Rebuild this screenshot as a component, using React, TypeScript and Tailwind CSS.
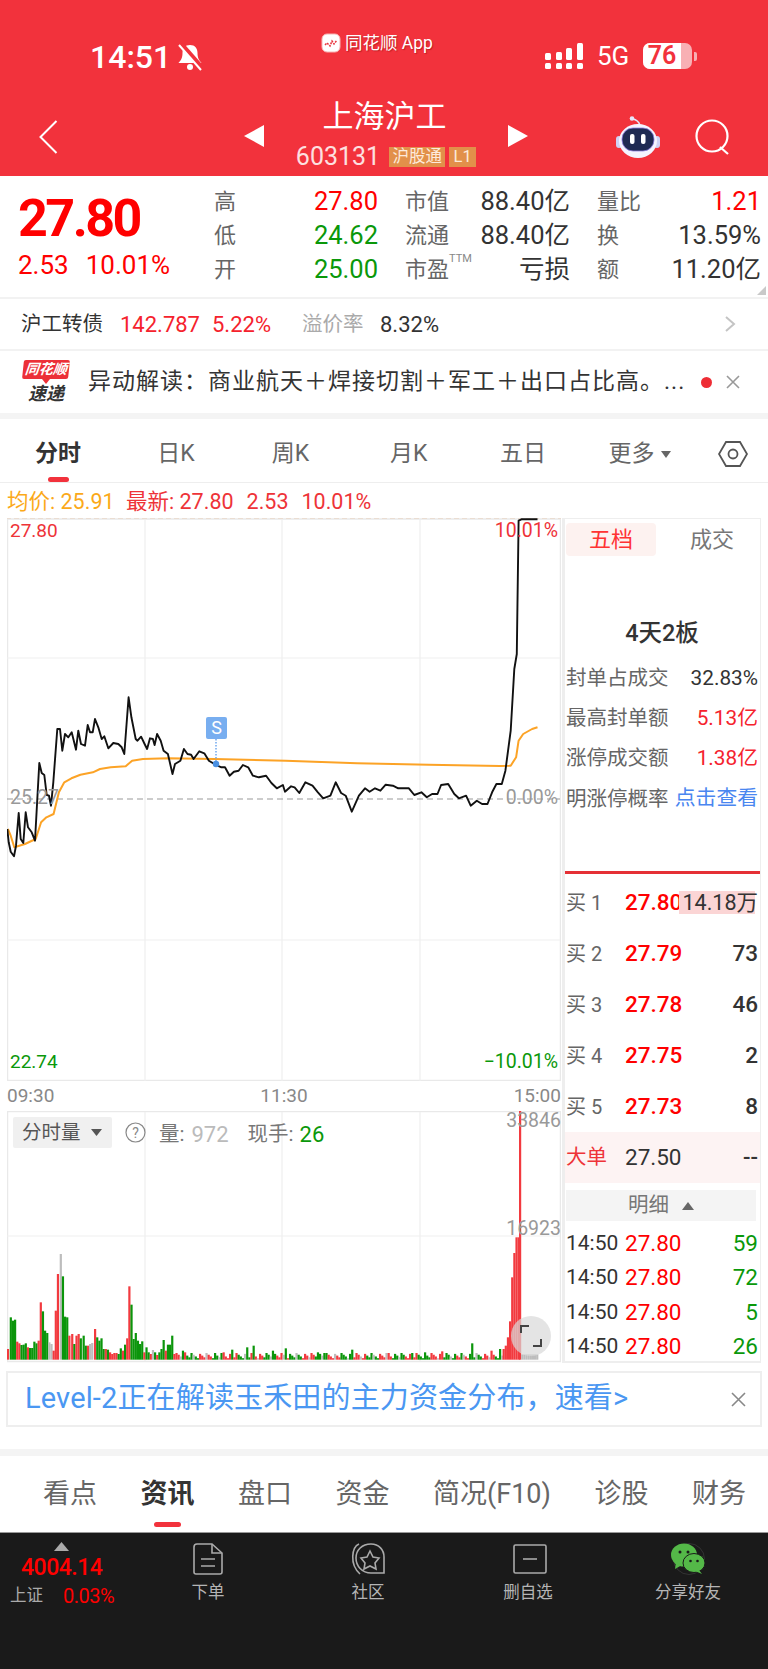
import React from "react";

const Z3 = (p: number[][]) => p.map(([x, y]) => `${(x / 2.8).toFixed(1)},${(y / 3 + 510).toFixed(1)}`).join(" ");
const Z8 = (p: number[][]) => p.map(([x, y]) => `${(x / 3).toFixed(1)},${(y / 3 + 700).toFixed(1)}`).join(" ");

const priceA = [[22,390],[26,430],[32,458],[42,472],[48,440],[56,342],[62,420],[70,432],[77,340],[84,385],[95,400],[105,425],[112,300],[118,192],[125,222],[133,228],[140,288],[147,290],[153,320],[160,250],[172,90],[180,90],[187,155],[195,105],[205,115],[215,100],[228,152],[235,95],[243,135],[255,140],[263,78],[270,100],[278,100],[285,60],[295,85],[305,120],[313,112],[325,148],[340,132],[355,135],[365,145],[373,165]];
const priceB = [[360,565],[368,625],[380,690],[385,695],[395,683],[405,705],[412,720],[420,688],[428,690],[433,708],[440,675],[450,695],[458,725],[470,735],[483,795],[490,765],[505,755],[515,720],[525,735],[535,737],[542,750],[558,727],[572,733],[585,755],[605,768],[620,775],[630,775],[643,800],[655,788],[668,785],[680,768],[695,775],[708,800],[725,805],[745,800],[760,822],[775,838],[792,828],[798,848],[815,832],[825,835],[838,852],[855,820],[875,830],[890,850],[905,868],[925,860],[940,820],[955,852],[968,860],[985,908],[1005,860],[1022,838],[1035,848],[1050,838],[1065,845],[1080,827],[1100,830],[1115,838],[1145,838],[1160,858],[1180,850],[1195,865],[1210,855],[1225,855],[1235,828],[1255,825],[1272,855],[1285,868],[1305,860],[1318,890],[1335,875],[1350,885],[1365,885],[1378,850],[1390,825],[1405,825],[1415,785],[1430,665],[1440,480],[1447,435],[1452,35],[1460,31],[1505,31]];
const avg = [[22,960],[30,980],[40,1015],[70,1005],[100,990],[115,940],[130,925],[150,915],[165,850],[180,820],[200,808],[225,797],[260,790],[280,780],[310,775],[352,772],[370,755],[400,750],[470,748],[600,750],[800,755],[1000,763],[1200,767],[1400,771],[1430,770],[1445,745],[1452,695],[1465,675],[1490,660],[1505,655]];

type Bar = [number, number, string];
const first: Bar[] = [[22,810,"r"],[30,715,"g"],[36,725,"g"],[42,722,"g"],[48,788,"r"],[54,793,"r"],[60,798,"g"],[66,797,"g"],[72,793,"g"],[78,805,"r"],[84,807,"g"],[90,807,"g"],[96,788,"g"],[102,793,"g"],[108,785,"r"],[114,670,"r"],[120,697,"g"],[126,755,"g"],[132,762,"g"],[138,790,"x"],[144,795,"x"],[150,815,"r"],[156,695,"r"],[162,585,"r"],[170,525,"x"],[176,592,"g"],[182,713,"g"],[188,715,"g"],[194,770,"r"],[202,765,"r"],[208,795,"g"],[214,770,"r"],[220,765,"r"],[226,778,"g"],[234,770,"g"],[240,800,"g"],[246,800,"r"],[252,795,"x"],[258,792,"x"],[266,750,"r"],[272,775,"g"],[278,785,"g"],[284,778,"g"],[290,810,"g"],[296,810,"r"],[302,812,"g"],[308,820,"r"],[314,825,"r"],[320,822,"r"],[326,822,"r"],[332,825,"g"],[338,808,"g"],[344,815,"r"],[350,797,"g"],[356,778,"r"],[362,622,"r"],[368,677,"g"],[374,780,"g"],[380,762,"g"],[386,785,"g"],[392,795,"g"],[398,787,"g"],[404,820,"r"],[410,805,"g"],[416,820,"g"],[422,825,"r"],[428,813,"x"],[434,820,"g"],[440,828,"r"],[446,820,"g"],[452,810,"g"],[458,783,"g"],[464,815,"r"],[470,797,"g"],[476,797,"g"],[482,770,"g"],[488,825,"r"]];
const spikes: Record<number, Bar> = {};
[[512,815,"g"],[518,820,"r"],[602,822,"g"],[626,820,"r"],[650,812,"g"],[692,805,"g"],[710,800,"g"],[764,815,"g"],[800,808,"g"],[890,820,"g"],[908,822,"g"],[986,812,"g"],[1088,822,"r"],[1154,822,"g"],[1190,820,"g"],[1238,817,"r"],[1292,822,"g"],[1322,793,"g"],[1376,815,"r"],[1400,810,"g"]].forEach((b) => { spikes[b[0] as number] = b as Bar; });
const low: Bar[] = [];
for (let i = 0, x = 494; x < 1410; i++, x += 6) {
  const c = ["r","g","g","r","x","r","g","r","r","g","x","g"][(i * 5) % 12];
  low.push(spikes[x] || [x, 822 + ((i * 37) % 7) * 2.6, c]);
}
const last: Bar[] = [[1410,810,"r"],[1416,800,"r"],[1422,775,"r"],[1428,727,"r"],[1434,595,"r"],[1440,522,"r"],[1446,475,"r"],[1452,475,"r"],[1456,95,"r"]];
const bars = [...first, ...low, ...last];
for (let x = 1462; x < 1510; x += 6) bars.push([x, 826, "x"]);
const fillOf: Record<string, string> = { r: "#f23a3f", g: "#0b950b", x: "#bdbdbd" };

function Stat({ label, value, color }: { label: React.ReactNode; value: string; color: string }) {
  return (
    <div className="flex items-center justify-between h-[34px]">
      <span className="text-[22px] leading-[34px] text-[#666]">{label}</span>
      <span className={`text-[25.5px] leading-none ${color}`}>{value}</span>
    </div>
  );
}

function Rank({ n, p, v, hi }: { n: string; p: string; v: string; hi?: boolean }) {
  return (
    <div className="flex items-center h-[51px]">
      <span className="w-[59px] text-[20px] text-[#666]">买 {n}</span>
      <span className="w-[53px] text-[22.500px] text-[#f00] font-medium">{p}</span>
      {hi ? (
        <span className="ml-auto mr-[3px] w-[76px] h-[23px] bg-[#fbd5d5] flex items-center justify-end text-[21.500px] text-[#333] leading-none whitespace-nowrap">
          <span className="-mr-[3px]">{v}</span>
        </span>
      ) : (
        <span className="ml-auto text-[22.500px] text-[#333] font-medium">{v}</span>
      )}
    </div>
  );
}

function Seal({ label, value, color }: { label: string; value: string; color: string }) {
  return (
    <div className="flex items-center justify-between h-[40.3px]">
      <span className="text-[20.500px] text-[#666] whitespace-nowrap">{label}</span>
      <span className={`text-[20.800px] whitespace-nowrap ${color}`}>{value}</span>
    </div>
  );
}

function Tick({ v }: { v: string }) {
  return (
    <div className="flex items-center h-[34.5px] text-[22.500px]">
      <span className="w-[59px] text-[21px] text-[#333]">14:50</span>
      <span className="text-[#f00]">27.80</span>
      <span className="ml-auto text-[#0a980a]">{v}</span>
    </div>
  );
}

function Foot({ label, children }: { label: string; children: React.ReactNode }) {
  return (
    <div className="w-[160px] flex flex-col items-center pt-[10px]">
      <div className="h-[32px] flex items-center justify-center">{children}</div>
      <div className="mt-[8px] h-[20px] leading-[20px] text-[16.500px] text-[#b5b5b5]">{label}</div>
    </div>
  );
}

export default function App() {
  return (
    <div className="relative w-[768px] h-[1669px] overflow-hidden bg-white [font-family:Roboto,'Noto_Sans_CJK_SC',sans-serif]">
      {/* header */}
      <div className="h-[176px] bg-[#f2323c] text-white">
        <div className="h-[96px] flex items-start pt-[33px]">
          <div className="w-[321px] pl-[90px] pt-[10px] flex items-center">
            <span className="text-[32px] leading-[26px] font-medium">14:51</span>
            <svg className="ml-[6px]" width="26" height="28" viewBox="0 0 26 28" fill="none">
              <path d="M13 2c-5 0-7.500 3.500-7.500 8 0 5.500-2 7.500-4 10h23c-2-2.500-4-4.500-4-10 0-4.500-2.500-8-7.500-8z" fill="#fff" />
              <circle cx="13" cy="24" r="3" fill="#fff" />
              <path d="M4 1l21 24" stroke="#f2323c" strokeWidth="5" />
              <path d="M2 2l22 25" stroke="#fff" strokeWidth="2" />
            </svg>
          </div>
          <div className="w-[224px] flex items-center">
            <svg width="20" height="20" viewBox="0 0 20 20">
              <rect x="1" y="1" width="18" height="18" rx="5" fill="#fff" stroke="#f7b5b5" strokeWidth="1" />
              <path d="M4 12l2-2 3 3 2-5 2 3 3-4" fill="none" stroke="#e8323c" strokeWidth="1.500" strokeDasharray="2 1" />
            </svg>
            <span className="ml-[4px] text-[17.500px] leading-[20px] whitespace-nowrap [text-shadow:1px_1px_1px_rgba(120,0,0,0.4)]">同花顺 App</span>
          </div>
          <div className="pt-[10px] flex items-center">
            <svg width="38" height="26" viewBox="0 0 38 26" fill="#fff">
              <rect x="0" y="20" width="6" height="6" rx="1.500" /><rect x="0" y="10" width="6" height="7" rx="1.500" />
              <rect x="11" y="20" width="6" height="6" rx="1.500" /><rect x="11" y="9" width="6" height="8" rx="1.500" />
              <rect x="21" y="20" width="6" height="6" rx="1.500" /><rect x="21" y="5" width="6" height="12" rx="1.500" />
              <rect x="32" y="20" width="6" height="6" rx="1.500" /><rect x="32" y="0" width="6" height="17" rx="1.500" />
            </svg>
            <span className="ml-[14px] w-[46px] text-[26px] leading-[26px]">5G</span>
            <div className="w-[49px] h-[26px] rounded-[7px] bg-[#f8b0b4]">
              <div className="w-[38px] h-[26px] bg-white text-[#f2323c] text-[25px] leading-[26px] font-semibold text-center rounded-l-[7px]">76</div>
            </div>
            <div className="ml-[2px] w-[3px] h-[9px] rounded-r-[2px] bg-[#f8b0b4]" />
          </div>
        </div>
        <div className="h-[80px] flex">
          <div className="w-[244px] pl-[39px] pt-[24px]">
            <svg width="19" height="34" viewBox="0 0 19 34" fill="none"><path d="M17.500 1L1.500 17l16 16" stroke="#fff" strokeWidth="2" /></svg>
          </div>
          <div className="w-[20px] pt-[29px]">
            <svg width="20" height="22" viewBox="0 0 20 22"><path d="M20 0v22L0 11z" fill="#fff" /></svg>
          </div>
          <div className="w-[244px] flex flex-col items-center pt-[3px]">
            <div className="text-[31px] leading-[36px] whitespace-nowrap -ml-[3px]">上海沪工</div>
            <div className="mt-[12px] h-[20px] flex items-center">
              <span className="text-[25px] leading-[20px] text-[#fde0e0]">603131</span>
              <span className="ml-[9px] w-[56px] h-[20px] bg-[#e2904a] text-[#fdeadb] text-[16.500px] leading-[20px] text-center whitespace-nowrap">沪股通</span>
              <span className="ml-[4px] w-[27px] h-[20px] bg-[#e2904a] text-[#fdeadb] text-[16.500px] leading-[20px] text-center">L1</span>
            </div>
          </div>
          <div className="w-[20px] pt-[29px]">
            <svg width="20" height="22" viewBox="0 0 20 22"><path d="M0 0v22l20-11z" fill="#fff" /></svg>
          </div>
          <div className="ml-[88px] pt-[20px] w-[44px]">
            <svg width="44" height="42" viewBox="0 0 44 42" fill="none">
              <circle cx="16" cy="2.500" r="2.300" fill="#e6e7fb" />
              <path d="M17 3q5 1 7 6" stroke="#e6e7fb" strokeWidth="1.500" />
              <rect x="0" y="20" width="6" height="12" rx="3" fill="#cfd2f5" />
              <rect x="38" y="20" width="6" height="12" rx="3" fill="#cfd2f5" />
              <ellipse cx="22" cy="25" rx="19" ry="17" fill="#f4f4ff" />
              <rect x="6" y="12" width="32" height="23" rx="11" fill="#1f2a52" stroke="#8f7fe0" strokeWidth="0.800" />
              <rect x="14" y="18" width="4.500" height="10" rx="2" fill="#fff" />
              <rect x="25" y="18" width="4.500" height="10" rx="2" fill="#fff" />
            </svg>
          </div>
          <div className="ml-[35px] pt-[23px]">
            <svg width="36" height="36" viewBox="0 0 36 36" fill="none">
              <circle cx="17" cy="17" r="15.500" stroke="#fff" strokeWidth="2.200" />
              <path d="M25 28l8 7" stroke="#fff" strokeWidth="2.200" />
            </svg>
          </div>
        </div>
      </div>

      {/* quote */}
      <div className="relative h-[121px] flex">
        <div className="w-[214px] pl-[18px]">
          <div className="mt-[18px] text-[52px] leading-[50px] font-bold text-[#f00] tracking-[-2.500px]">27.80</div>
          <div className="mt-[8px] flex text-[26px] leading-[26px] text-[#f00]">
            <span>2.53</span><span className="ml-[17px]">10.01%</span>
          </div>
        </div>
        <div className="pt-[9px] grid grid-cols-[164px_165px_164px] gap-x-[27px] content-start">
          <Stat label="高" value="27.80" color="text-[#f00]" />
          <Stat label="市值" value="88.40亿" color="text-[#333]" />
          <Stat label="量比" value="1.21" color="text-[#f00]" />
          <Stat label="低" value="24.62" color="text-[#0a980a]" />
          <Stat label="流通" value="88.40亿" color="text-[#333]" />
          <Stat label="换" value="13.59%" color="text-[#333]" />
          <Stat label="开" value="25.00" color="text-[#0a980a]" />
          <Stat label={<span className="flex items-start">市盈<span className="text-[11px] leading-[12px] text-[#888]">TTM</span></span>} value="亏损" color="text-[#333]" />
          <Stat label="额" value="11.20亿" color="text-[#333]" />
        </div>
        <svg className="absolute right-[2px] bottom-[2px]" width="9" height="9" viewBox="0 0 9 9"><path d="M9 0v9H0z" fill="#c9c9c9" /></svg>
      </div>

      {/* convertible */}
      <div className="h-[54px] border-t-2 border-b-2 border-[#f2f2f2] flex items-center pl-[21px] text-[22px] whitespace-nowrap">
        <span className="w-[99px] text-[20.500px] text-[#333]">沪工转债</span>
        <span className="w-[92px] text-[#f5222d]">142.787</span>
        <span className="w-[90px] text-[#f5222d]">5.22%</span>
        <span className="w-[78px] text-[20.500px] text-[#aaa]">溢价率</span>
        <span className="text-[#333]">8.32%</span>
        <svg className="ml-auto mr-[32px]" width="12" height="16" viewBox="0 0 12 16" fill="none"><path d="M2 1l8 7-8 7" stroke="#c4c4c4" strokeWidth="2" /></svg>
      </div>

      {/* anomaly */}
      <div className="h-[62px] flex items-center">
        <div className="ml-[22px] w-[48px] h-[44px] flex flex-col items-center">
          <div className="w-[46px] h-[19px] rounded-[2px] bg-[#ec3038] text-white text-[14px] leading-[19px] font-bold italic text-center -skew-x-6 whitespace-nowrap">同花顺</div>
          <svg className="block" width="8" height="5" viewBox="0 0 8 5"><path d="M0 0h8L4 5z" fill="#ec3038" /></svg>
          <div className="text-[#333] text-[18px] leading-[20px] font-bold italic whitespace-nowrap">速递</div>
        </div>
        <div className="ml-[18px] w-[600px] text-[23px] tracking-[1px] text-[#333] whitespace-nowrap overflow-hidden">异动解读：商业航天＋焊接切割＋军工＋出口占比高。...</div>
        <div className="ml-[13px] w-[11px] h-[11px] rounded-full bg-[#ee2d35]" />
        <svg className="ml-[14px]" width="14" height="14" viewBox="0 0 14 14"><path d="M1 1l12 12M13 1L1 13" stroke="#999" strokeWidth="1.600" /></svg>
      </div>
      <div className="h-[6px] bg-[#f4f4f4]" />

      {/* period tabs */}
      <div className="relative h-[64px] pt-[7px] flex items-center border-b border-[#eee] text-[23px] text-[#666] whitespace-nowrap">
        <span className="ml-[35px] w-[46px] font-bold text-[#333] text-center">分时</span>
        <span className="ml-[76px] w-[38px] text-center">日K</span>
        <span className="ml-[75px] w-[41px] text-center">周K</span>
        <span className="ml-[79px] w-[37px] text-center">月K</span>
        <span className="ml-[73px] w-[46px] text-center">五日</span>
        <span className="ml-[62px] w-[47px] text-center">更多</span>
        <svg className="ml-[6px]" width="10" height="7" viewBox="0 0 10 7"><path d="M0 0h10L5 7z" fill="#666" /></svg>
        <svg className="ml-[47px]" width="30" height="26" viewBox="0 0 30 26" fill="none">
          <path d="M8 1h14l7 12-7 12H8L1 13z" stroke="#555" strokeWidth="1.800" />
          <circle cx="15" cy="13" r="4.500" stroke="#555" strokeWidth="1.800" />
        </svg>
        <div className="absolute left-[48px] bottom-0 w-[21px] h-[5px] rounded-full bg-[#f2323c]" />
      </div>

      {/* info */}
      <div className="h-[35px] pt-[3px] flex items-center pl-[7px] text-[21.500px] whitespace-nowrap">
        <span className="w-[119px] text-[#fba919]">均价: 25.91</span>
        <span className="text-[#ee3338]">最新: 27.80</span>
        <span className="ml-[13px] text-[#ee3338]">2.53</span>
        <span className="ml-[13px] text-[#ee3338]">10.01%</span>
      </div>

      {/* main */}
      <div className="flex ml-[7px] h-[845px]">
        <div className="w-[554px] shrink-0">
          <div className="relative h-[563px]">
            <svg className="block" width="554" height="563" viewBox="7 519 554 563" fill="none">
              <path d="M6 519.500H562" stroke="#eeb98c" strokeWidth="1" strokeDasharray="5 3" />
              <rect x="7.500" y="520" width="553" height="561.500" stroke="#e9e9e9" strokeWidth="1.500" />
              <path d="M145 520V1082M282 520V1082M420 520V1082M7 659H560M7 941H560" stroke="#efefef" strokeWidth="1.200" />
              <path d="M7 800H560" stroke="#999" strokeWidth="1.200" strokeDasharray="6 4" />
              <polyline points={Z3(avg)} stroke="#fca326" strokeWidth="2" strokeLinejoin="round" />
              <polyline points={`${Z8(priceA)} ${Z3(priceB)}`} stroke="#111" strokeWidth="1.900" strokeLinejoin="round" />
              <path d="M216 740V764" stroke="#6fa8ee" strokeWidth="1.500" strokeDasharray="1.500 1.500" />
              <circle cx="216" cy="765" r="3.200" fill="#4a90e2" />
            </svg>
            <span className="absolute left-[3px] top-[1px] text-[19px] leading-[24px] text-[#ee3338]">27.80</span>
            <span className="absolute right-[3px] top-[1px] text-[19.500px] leading-[24px] text-[#ee3338]">10.01%</span>
            <span className="absolute left-[3px] top-[268px] text-[19.500px] leading-[24px] text-[#999]">25.27</span>
            <span className="absolute right-[3px] top-[268px] text-[19.500px] leading-[24px] text-[#999]">0.00%</span>
            <span className="absolute left-[3px] bottom-[7px] text-[19px] leading-[24px] text-[#0a980a]">22.74</span>
            <span className="absolute right-[3px] bottom-[7px] text-[19.500px] leading-[24px] text-[#0a980a]">−10.01%</span>
            <div className="absolute left-[199px] top-[199px] w-[21px] h-[22px] rounded-[2px] bg-[#78aef0] text-white text-[18px] leading-[22px] text-center">S</div>
          </div>
          <div className="h-[30px] flex items-center justify-between text-[19px] text-[#888]">
            <span>09:30</span><span>11:30</span><span>15:00</span>
          </div>
          <div className="relative h-[252px]">
            <svg className="block" width="554" height="252" viewBox="7 1112 554 252" fill="none">
              <rect x="7.500" y="1112.500" width="553" height="250" stroke="#e9e9e9" strokeWidth="1.500" />
              <path d="M145 1113V1362M282 1113V1362M420 1113V1362M7 1237H560" stroke="#efefef" strokeWidth="1.200" />
              {bars.map(([x, t, c], i) => (
                <rect key={i} x={x / 2.8 - 1} y={t / 3 + 1080} width={2.2} height={(842 - t) / 3} fill={fillOf[c]} />
              ))}
            </svg>
            <div className="absolute left-[6px] top-[6px] w-[99px] h-[31px] rounded-[2px] bg-[#f0f0f0] flex items-center pl-[9px] text-[19.500px] text-[#555]">
              分时量
              <svg className="ml-[10px]" width="11" height="7" viewBox="0 0 11 7"><path d="M0 0h11L5.500 7z" fill="#555" /></svg>
            </div>
            <svg className="absolute left-[118px] top-[11px]" width="21" height="21" viewBox="0 0 21 21" fill="none">
              <circle cx="10.500" cy="10.500" r="9.500" stroke="#888" strokeWidth="1.200" />
              <text x="10.500" y="15.500" textAnchor="middle" fontSize="14" fill="#888">?</text>
            </svg>
            <div className="absolute left-[152px] top-[8px] h-[30px] flex items-center text-[20.500px] text-[#777] whitespace-nowrap">
              <span>量:</span>
              <span className="ml-[7px] text-[22px] text-[#bbb]">972</span>
              <span className="ml-[19px]">现手:</span>
              <span className="ml-[6px] text-[22px] text-[#0a980a]">26</span>
            </div>
            <span className="absolute right-0 top-[-2px] text-[19.500px] leading-[24px] text-[#999]">33846</span>
            <span className="absolute right-0 top-[106px] text-[19.500px] leading-[24px] text-[#999]">16923</span>
            <div className="absolute left-[504px] top-[205px] w-[40px] h-[40px] rounded-full bg-[#d8d8d8]/70 flex items-center justify-center">
              <svg width="22" height="22" viewBox="0 0 22 22" fill="none">
                <path d="M1 8V1h8M21 14v7h-8" stroke="#444" strokeWidth="2" />
              </svg>
            </div>
          </div>
        </div>
        <div className="ml-[1px] w-[199px] h-[845px] border-l-[3px] border-r border-t border-b-2 border-[#eee] pl-[1px] pr-[2px]">
          <div className="mt-[4px] h-[33px] flex items-center text-[22px]">
            <div className="w-[90px] h-[33px] rounded-[4px] bg-[#fdf2f0] text-[#f33] leading-[33px] text-center">五档</div>
            <div className="ml-[34px] text-[#777]">成交</div>
          </div>
          <div className="mt-[62px] h-[30px] leading-[30px] text-center text-[23.500px] font-medium text-[#333]">4天2板</div>
          <div className="mt-[10px]">
            <Seal label="封单占成交" value="32.83%" color="text-[#333]" />
            <Seal label="最高封单额" value="5.13亿" color="text-[#f5222d]" />
            <Seal label="涨停成交额" value="1.38亿" color="text-[#f5222d]" />
            <Seal label="明涨停概率" value="点击查看" color="text-[#4a86f0]" />
          </div>
          <div className="mt-[52px] -ml-[1px] -mr-[2px] h-[3px] bg-[#e53035]" />
          <div className="mt-[3px]">
            <Rank n="1" p="27.80" v="14.18万" hi />
            <Rank n="2" p="27.79" v="73" />
            <Rank n="3" p="27.78" v="46" />
            <Rank n="4" p="27.75" v="2" />
            <Rank n="5" p="27.73" v="8" />
          </div>
          <div className="-ml-[1px] -mr-[2px] pl-[1px] pr-[2px] h-[51px] bg-[#fdf3f3] flex items-center">
            <span className="w-[59px] text-[20.500px] text-[#ee3338]">大单</span>
            <span className="text-[22.500px] text-[#333]">27.50</span>
            <span className="ml-auto text-[22px] text-[#333] font-medium">--</span>
          </div>
          <div className="mt-[7px] mr-[2px] h-[31px] bg-[#f4f4f4] flex items-center justify-center text-[20.500px] text-[#777]">
            明细
            <svg className="ml-[13px]" width="12" height="8" viewBox="0 0 12 8"><path d="M0 8h12L6 0z" fill="#666" /></svg>
          </div>
          <div className="mt-[5px]">
            <Tick v="59" /><Tick v="72" /><Tick v="5" /><Tick v="26" />
          </div>
        </div>
      </div>

      {/* level 2 */}
      <div className="mt-[8px] ml-[6px] w-[756px] h-[56px] border-2 border-[#eee] flex items-center pl-[17px] pr-[14px]">
        <span className="text-[29px] tracking-[0.150px] text-[#4a97f2] whitespace-nowrap">Level-2正在解读玉禾田的主力资金分布，速看&gt;</span>
        <svg className="ml-auto" width="15" height="15" viewBox="0 0 15 15"><path d="M1 1l13 13M14 1L1 14" stroke="#888" strokeWidth="1.600" /></svg>
      </div>
      <div className="mt-[22px] h-[7px] bg-[#f4f4f4]" />

      {/* bottom tabs */}
      <div className="relative h-[76px] flex items-center gap-[43.500px] pl-[43px] text-[27px] text-[#666] whitespace-nowrap">
        <span>看点</span>
        <span className="font-bold text-[#333]">资讯</span>
        <span>盘口</span>
        <span>资金</span>
        <span>简况(F10)</span>
        <span>诊股</span>
        <span>财务</span>
        <div className="absolute left-[154px] bottom-[5px] w-[27px] h-[5px] rounded-full bg-[#f2323c]" />
      </div>

      {/* footer */}
      <div className="h-[137px] bg-[#1a1a1a] border-t border-[#999] flex">
        <div className="w-[128px] pt-[9px]">
          <svg className="ml-[54px]" width="15" height="9" viewBox="0 0 15 9"><path d="M0 9h15L7.500 0z" fill="#aaa" /></svg>
          <div className="ml-[21px] mt-[3px] text-[23px] leading-[28px] text-[#f00] font-medium tracking-[-0.500px]">4004.14</div>
          <div className="mt-[2px] ml-[10px] flex items-center h-[24px]">
            <span className="w-[53px] text-[16.500px] text-[#aaa]">上证</span>
            <span className="text-[20px] text-[#f00] tracking-[-0.500px]">0.03%</span>
          </div>
        </div>
        <Foot label="下单">
          <svg width="30" height="32" viewBox="0 0 30 32" fill="none" stroke="#aaa" strokeWidth="1.600">
            <path d="M4 1h15l10 9v19a2 2 0 0 1-2 2H3a2 2 0 0 1-2-2V4a3 3 0 0 1 3-3z" />
            <path d="M19 1v9h10M8 16h14M8 23h14" />
          </svg>
        </Foot>
        <Foot label="社区">
          <svg width="36" height="34" viewBox="0 0 36 34" fill="none" stroke="#aaa" strokeWidth="1.600">
            <path d="M9 2C2 5-1 22 10 32" />
            <path d="M21 2C12 2 6 8 6 16s6 15 15 15h13V15C34 8 29 2 21 2z" />
            <path d="M20 9l3 6 6 1-4 5 1 6-6-3-6 3 1-6-4-5 6-1z" />
          </svg>
        </Foot>
        <Foot label="删自选">
          <svg className="ml-[4px]" width="34" height="30" viewBox="0 0 34 30" fill="none" stroke="#aaa" strokeWidth="1.600">
            <rect x="1" y="1" width="32" height="28" rx="1.500" />
            <path d="M10 15h14" />
          </svg>
        </Foot>
        <Foot label="分享好友">
          <svg width="34" height="32" viewBox="0 0 34 32">
            <circle cx="18" cy="16" r="15.500" fill="none" stroke="#333" strokeWidth="1" />
            <ellipse cx="13" cy="12" rx="13" ry="11.500" fill="#54b848" />
            <path d="M5 19l-1 7 7-4z" fill="#54b848" />
            <ellipse cx="23" cy="20" rx="11" ry="9.500" fill="#54b848" stroke="#1a1a1a" strokeWidth="1" />
            <path d="M28 27l3 4-7-3z" fill="#54b848" />
            <circle cx="9" cy="9" r="1.500" fill="#1a1a1a" /><circle cx="17" cy="9" r="1.500" fill="#1a1a1a" />
            <circle cx="19.500" cy="18" r="1.300" fill="#1a1a1a" /><circle cx="26.500" cy="18" r="1.300" fill="#1a1a1a" />
          </svg>
        </Foot>
      </div>
    </div>
  );
}
